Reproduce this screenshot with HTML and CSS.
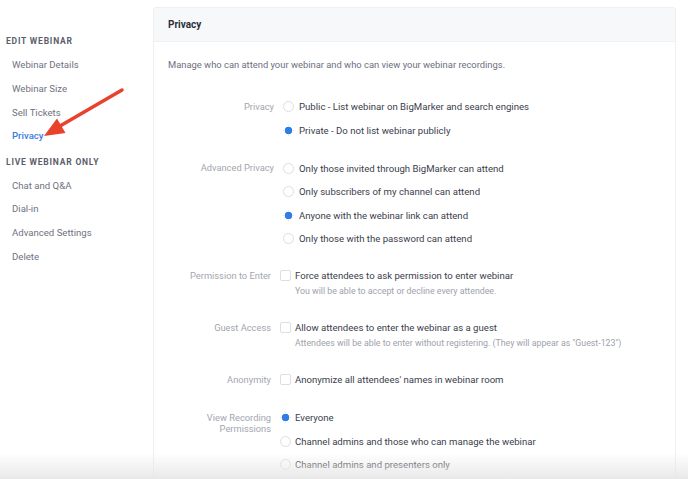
FILE: index.html
```html
<!DOCTYPE html>
<html>
    <head>
        <title>Privacy - Edit Webinar</title>
        <link rel="stylesheet" href="styles.css">
    </head>
    <body>
        <nav class="sidebar">
            <h4>Edit Webinar</h4>
            <a>Webinar Details</a>
            <a>Webinar Size</a>
            <a>Sell Tickets</a>
            <a class="active">Privacy</a>
            <h4 class="second">Live Webinar Only</h4>
            <a>Chat and Q&amp;A</a>
            <a>Dial-in</a>
            <a>Advanced Settings</a>
            <a>Delete</a>
        </nav>

        <svg class="pointer" width="140" height="150" viewBox="0 0 140 150">
            <line x1="122" y1="90" x2="60" y2="126" stroke="#e8412c" stroke-width="3.5" stroke-linecap="round"/>
            <polygon points="44,136 57,118.5 65.5,133" fill="#e8412c"/>
        </svg>

        <main class="card">
            <header>Privacy</header>
            <section class="body">
                <p class="intro">Manage who can attend your webinar and who can view your webinar recordings.</p>

                <div class="row">
                    <label>Privacy</label>
                    <div class="options">
                        <p><span class="radio"></span>Public - List webinar on BigMarker and search engines</p>
                        <p><span class="radio on"></span>Private - Do not list webinar publicly</p>
                    </div>
                </div>

                <div class="row tight">
                    <label>Advanced Privacy</label>
                    <div class="options">
                        <p><span class="radio"></span>Only those invited through BigMarker can attend</p>
                        <p><span class="radio"></span>Only subscribers of my channel can attend</p>
                        <p><span class="radio on"></span>Anyone with the webinar link can attend</p>
                        <p><span class="radio"></span>Only those with the password can attend</p>
                    </div>
                </div>

                <div class="row narrow">
                    <label>Permission to Enter</label>
                    <div class="options">
                        <p><span class="check"></span>Force attendees to ask permission to enter webinar</p>
                        <small>You will be able to accept or decline every attendee.</small>
                    </div>
                </div>

                <div class="row narrow">
                    <label>Guest Access</label>
                    <div class="options">
                        <p><span class="check"></span>Allow attendees to enter the webinar as a guest</p>
                        <small>Attendees will be able to enter without registering. (They will appear as "Guest-123")</small>
                    </div>
                </div>

                <div class="row narrow">
                    <label>Anonymity</label>
                    <div class="options">
                        <p><span class="check"></span>Anonymize all attendees' names in webinar room</p>
                    </div>
                </div>

                <div class="row narrow">
                    <label>View Recording Permissions</label>
                    <div class="options">
                        <p><span class="radio on"></span>Everyone</p>
                        <p><span class="radio"></span>Channel admins and those who can manage the webinar</p>
                        <p><span class="radio"></span>Channel admins and presenters only</p>
                    </div>
                </div>
            </section>
        </main>

        <div class="fade"></div>
    </body>
</html>
```

FILE: styles.css
```css
body {
    display: flex;
    align-items: flex-start;
    margin: 0;
    padding: 0;
    height: 100vh;
    overflow: hidden;
    background: #fff;
    font-family: Roboto, "Noto Sans", sans-serif;
    font-size: 9.6px;
    color: #3b3e4b;
}
.sidebar {
    display: flex;
    flex-direction: column;
    width: 153px;
    flex-shrink: 0;
    padding-top: 34px;
}
.sidebar h4 {
    margin: 0 0 5px 6px;
    font-size: 8.5px;
    line-height: 14px;
    font-weight: 700;
    letter-spacing: 0.8px;
    text-transform: uppercase;
    color: #5b5e69;
}
.sidebar h4.second {
    margin-top: 6.5px;
    margin-bottom: 5px;
}
.sidebar a {
    padding-left: 12px;
    line-height: 23.8px;
    font-size: 9.6px;
    color: #6f7281;
}
.sidebar a.active {
    color: #3a7be0;
    font-weight: 500;
}
.pointer {
    position: absolute;
    left: 0;
    top: 0;
}
.card {
    width: 521px;
    margin-top: 7px;
    border: 1px solid #eeeff1;
    border-radius: 3px;
    min-height: 520px;
}
.card header {
    height: 33px;
    line-height: 33px;
    padding-left: 14px;
    background: #f7f8fa;
    border-bottom: 1px solid #eff0f2;
    font-size: 10px;
    font-weight: 700;
    color: #2c2f3b;
}
.body {
    padding: 14px 14px 0 14px;
}
.intro {
    margin: 0 0 21px 0;
    line-height: 18px;
    font-size: 9.4px;
    color: #6c7080;
}
.row {
    display: flex;
    margin-bottom: 14.5px;
}
.row.tight {
    margin-bottom: 13.5px;
}
.row label {
    width: 106px;
    flex-shrink: 0;
    padding-top: 5.75px;
    line-height: 11.5px;
    font-size: 9.3px;
    text-align: right;
    color: #a3a6ae;
}
.options {
    display: flex;
    flex-direction: column;
    padding-left: 9px;
}
.options p {
    display: flex;
    align-items: center;
    gap: 5px;
    margin: 0;
    height: 23.5px;
}
.options small {
    margin: -5px 0 2px 16px;
    line-height: 17px;
    font-size: 8.8px;
    color: #9ea2ab;
}
.row.narrow label {
    width: 103px;
}
.row.narrow .options p {
    gap: 4px;
}
.row.narrow .options small {
    margin-left: 15px;
}
.radio, .check {
    display: inline-block;
    width: 9px;
    height: 9px;
    border: 1px solid #dcdee2;
    border-radius: 50%;
    flex-shrink: 0;
}
.radio.on {
    border-color: transparent;
    background: radial-gradient(circle, #2f7de6 3.5px, transparent 4.1px);
}
.check {
    border-radius: 2px;
}
.fade {
    position: fixed;
    left: 0;
    right: 0;
    bottom: 0;
    height: 26px;
    background: linear-gradient(rgba(230, 230, 230, 0), rgba(230, 230, 230, 0.9));
    pointer-events: none;
}
```
